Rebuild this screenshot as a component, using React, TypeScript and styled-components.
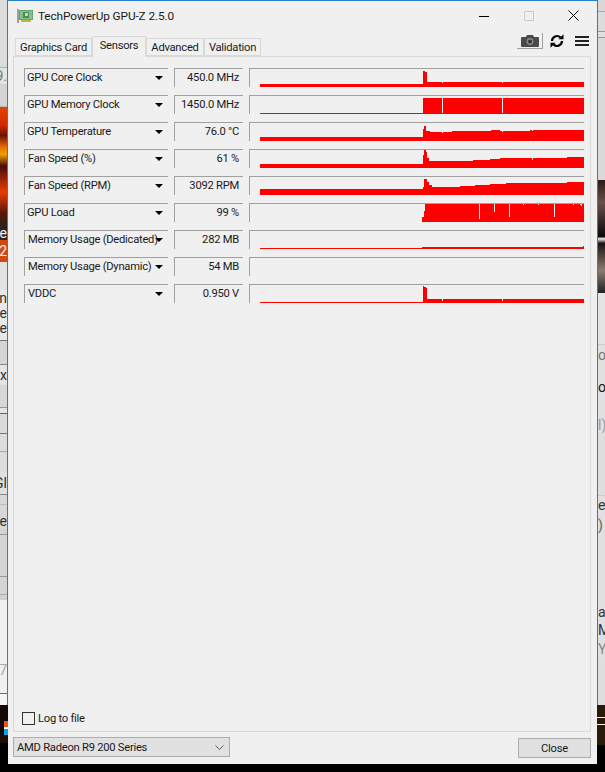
import React from 'react';
import styled, { createGlobalStyle } from 'styled-components';

const GlobalStyle = createGlobalStyle`
  html, body {
    margin: 0;
    padding: 0;
    background: #000;
  }
  * {
    box-sizing: border-box;
  }
`;

const FONT = `Roboto, "Noto Sans", Arial, sans-serif`;

const Stage = styled.div`
  display: flex;
  align-items: flex-start;
  width: 605px;
  height: 772px;
  overflow: hidden;
  background: #000;
  font-family: ${FONT};
`;

const Strip = styled.div`
  display: flex;
  flex-direction: column;
  flex: none;
  width: 8px;
  height: 772px;
  overflow: hidden;
`;

const StripTop = styled.div<{ $side: 'left' | 'right' }>`
  height: 705px;
  flex: none;
  ${p => (p.$side === 'left' ? 'border-right' : 'border-left')}: 1px solid #2a7fc9;
  overflow: hidden;
`;

const Band = styled.div<{ $h: number; $bg: string; $side: 'left' | 'right'; $line?: string; $color?: string }>`
  display: flex;
  align-items: center;
  justify-content: ${p => (p.$side === 'left' ? 'flex-end' : 'flex-start')};
  height: ${p => p.$h}px;
  background: ${p => p.$bg};
  border-bottom: ${p => (p.$line ? `1px solid ${p.$line}` : 'none')};
  overflow: hidden;
  white-space: nowrap;
  font-size: 14px;
  color: ${p => p.$color || '#333'};
`;

const Window = styled.div`
  display: flex;
  flex-direction: column;
  flex: none;
  width: 589px;
  height: 764px;
  padding: 0 6px 0 5px;
  background: #f0f0f0;
  border-top: 1px solid #2a7fc9;
  font-size: 11.2px;
  letter-spacing: -0.25px;
  color: #1a1a1a;
`;

const TitleBar = styled.div`
  display: flex;
  align-items: center;
  height: 29px;
  margin-right: -5px;
  padding: 0 0 0 4px;
  flex: none;
`;

const AppTitle = styled.span`
  margin-left: 5px;
  font-size: 11.8px;
  letter-spacing: -0.1px;
  flex: 1;
`;

const WindowControl = styled.div`
  display: flex;
  justify-content: center;
  width: 45px;
  flex: none;
`;

const TabRow = styled.div`
  display: flex;
  align-items: flex-end;
  height: 26px;
  padding-left: 2px;
  flex: none;
`;

const Tab = styled.div<{ $active?: boolean; $w: number }>`
  display: flex;
  align-items: center;
  justify-content: center;
  width: ${p => p.$w}px;
  height: ${p => (p.$active ? 21 : 18)}px;
  padding-bottom: ${p => (p.$active ? 3 : 0)}px;
  margin-bottom: ${p => (p.$active ? -1 : 0)}px;
  background: #f0f0f0;
  border: 1px solid #d9d9d9;
  border-bottom: ${p => (p.$active ? 'none' : '1px solid #d9d9d9')};
  position: relative;
  z-index: ${p => (p.$active ? 1 : 0)};
`;

const Tools = styled.div`
  display: flex;
  align-items: center;
  margin-left: auto;
  height: 26px;
  padding: 0 2px 4px 0;
`;

const CameraButton = styled.div`
  display: flex;
  align-items: center;
  justify-content: center;
  width: 26px;
  height: 16px;
  margin-right: 7px;
  border-right: 1px solid #a0a0a0;
  border-bottom: 1px solid #a0a0a0;
`;

const ToolIcon = styled.div`
  display: flex;
  margin-right: 11px;
  &:last-child {
    margin-right: 0;
  }
`;

const Panel = styled.div`
  display: flex;
  flex-direction: column;
  height: 676px;
  padding: 11px 6px 6px 10px;
  border: 1px solid #d9d9d9;
  flex: none;
`;

const Rows = styled.div`
  display: flex;
  flex-direction: column;
  gap: 8px;
  flex: 1;
`;

const Row = styled.div`
  display: flex;
  gap: 6px;
  height: 19px;
`;

const Cell = styled.div`
  display: flex;
  align-items: center;
  height: 19px;
  padding-bottom: 2px;
  border-top: 1px solid #a0a0a0;
  border-left: 1px solid #a0a0a0;
  white-space: nowrap;
`;

const SensorName = styled(Cell)<{ $tight?: boolean }>`
  position: relative;
  width: 144px;
  padding-left: ${p => (p.$tight ? 2 : 3)}px;

  &::after {
    content: '';
    position: absolute;
    top: 7px;
    right: 5px;
    border-style: solid;
    border-width: 4px 4px 0 4px;
    border-color: #000 transparent transparent transparent;
  }
`;

const SensorValue = styled(Cell)`
  justify-content: flex-end;
  width: 69px;
  padding-right: 4px;
`;

const Graph = styled(Cell)`
  display: block;
  width: 335px;
  padding-bottom: 0;
`;

const GraphSvg = styled.svg`
  display: block;
`;

const LogRow = styled.label`
  display: flex;
  align-items: center;
  gap: 3px;
  margin-left: -2px;
`;

const LogBox = styled.span`
  width: 13px;
  height: 13px;
  background: #f0f0f0;
  border: 1px solid #333;
`;

const Footer = styled.div`
  display: flex;
  justify-content: space-between;
  align-items: flex-start;
  padding-top: 5px;
  flex: none;
`;

const GpuSelect = styled.div`
  display: flex;
  align-items: center;
  justify-content: space-between;
  width: 217px;
  height: 20px;
  padding: 0 5px 0 3px;
  background: #e1e1e1;
  border: 1px solid #adadad;
`;

const CloseButton = styled.div`
  display: flex;
  align-items: center;
  justify-content: center;
  width: 73px;
  height: 20px;
  margin-top: 1px;
  background: #e1e1e1;
  border: 1px solid #adadad;
`;

type BandSpec = { h: number; bg: string; text?: string; line?: string; color?: string };

const PHOTO_LEFT = 'linear-gradient(180deg, #e8400a 0%, #d42a04 15%, #6a1205 24%, #e86a08 34%, #f0a000 40%, #4a0c05 50%, #e83c04 72%, #5a1608 90%, #30201a 100%)';
const PHOTO_RIGHT = 'linear-gradient(180deg, #2a1c18 0%, #6a5048 20%, #0a0a0a 50%, #eeeeee 52%, #1a1410 56%, #8a7a70 80%, #222 100%)';

const leftBands: BandSpec[] = [
  { h: 68, bg: '#dcdcdc', line: '#b0b0b0' },
  { h: 16, bg: '#e4e4e4', text: '9.', color: '#777' },
  { h: 23, bg: '#d4d4d4', line: '#b8b8b8' },
  { h: 118, bg: PHOTO_LEFT },
  { h: 15, bg: '#30201a', text: 'e', color: '#f4f4f4' },
  { h: 22, bg: '#d2480e', text: '2', color: '#f4f4f4' },
  { h: 28, bg: '#e2e2e2' },
  { h: 15, bg: '#e8e8e8', text: 'n' },
  { h: 15, bg: '#e8e8e8', text: 'e' },
  { h: 15, bg: '#e8e8e8', text: 'e' },
  { h: 6, bg: '#e8e8e8', line: '#777' },
  { h: 24, bg: '#d6d6d6', line: '#888' },
  { h: 20, bg: '#e4e4e4', text: 'x' },
  { h: 23, bg: '#d8d8d8', line: '#999' },
  { h: 6, bg: '#e4e4e4', line: '#666' },
  { h: 20, bg: '#dadada', line: '#777' },
  { h: 18, bg: '#dcdcdc', line: '#aaa' },
  { h: 20, bg: '#dcdcdc' },
  { h: 23, bg: '#e0e0e0', text: 'Gl', line: '#888' },
  { h: 10, bg: '#d8d8d8', line: '#bbb' },
  { h: 8, bg: '#d8d8d8' },
  { h: 16, bg: '#d8d8d8', text: 'e' },
  { h: 6, bg: '#d4d4d4', line: '#999' },
  { h: 42, bg: '#d4d4d4', line: '#999' },
  { h: 18, bg: '#d4d4d4', line: '#aaa' },
  { h: 5, bg: '#d0d0d0' },
  { h: 60, bg: '#f0f0f0' },
  { h: 20, bg: '#f0f0f0', text: '7', color: '#aaa' },
  { h: 14, bg: '#f0f0f0', line: '#2a7fc9' },
  { h: 11, bg: '#f4f4f4' },
];

const leftLower: BandSpec[] = [
  { h: 16, bg: '#140804' },
  { h: 6, bg: 'linear-gradient(90deg, #140804 50%, #f25022 50%)' },
  { h: 2, bg: 'linear-gradient(90deg, #140804 50%, #fff 50%)' },
  { h: 6, bg: 'linear-gradient(90deg, #140804 50%, #05a6f0 50%)' },
  { h: 8, bg: '#1e0c06' },
];

const rightBands: BandSpec[] = [
  { h: 12, bg: '#d8d8d8', line: '#aaa' },
  { h: 20, bg: '#dcdcdc', line: '#999' },
  { h: 6, bg: '#e0e0e0', line: '#999' },
  { h: 142, bg: '#dadada' },
  { h: 113, bg: PHOTO_RIGHT },
  { h: 52, bg: '#e4e4e4', line: '#ccc' },
  { h: 20, bg: '#e0e0e0', text: 'o', color: '#777' },
  { h: 12, bg: '#e0e0e0' },
  { h: 20, bg: '#e0e0e0', text: 'or', color: '#111' },
  { h: 18, bg: '#e0e0e0' },
  { h: 20, bg: '#e0e0e0', text: 'l)', color: '#999' },
  { h: 61, bg: '#dedede', line: '#ccc' },
  { h: 18, bg: '#e0e0e0', text: 'eu' },
  { h: 22, bg: '#e0e0e0', text: ')', color: '#666' },
  { h: 67, bg: '#e0e0e0' },
  { h: 18, bg: '#e0e0e0', text: 'ab' },
  { h: 18, bg: '#e0e0e0', text: 'M' },
  { h: 20, bg: '#e0e0e0', text: 'YE', color: '#888' },
  { h: 46, bg: '#dedede' },
];

const rightLower: BandSpec[] = [
  { h: 12, bg: '#2a1a08' },
  { h: 1, bg: '#f0f0f0' },
  { h: 6, bg: '#2a1a08' },
  { h: 1, bg: '#f0f0f0' },
  { h: 20, bg: '#2a1a08' },
];

type Step = [number, number];

type Sensor = {
  name: string;
  value: string;
  tight?: boolean;
  steps: Step[];
  notches?: Step[];
};

const END = 584;

// steps are [screen x, top of the fill within the 19px row], notches cut the fill from the top
const sensors: Sensor[] = [
  {
    name: 'GPU Core Clock',
    value: '450.0 MHz',
    tight: true,
    steps: [[260, 16], [423, 3], [425, 4], [427, 14]],
    notches: [[442, 15], [502, 15]],
  },
  {
    name: 'GPU Memory Clock',
    value: '1450.0 MHz',
    tight: true,
    steps: [[260, 18], [423, 3]],
    notches: [[442, 18], [502, 18]],
  },
  {
    name: 'GPU Temperature',
    value: '76.0 °C',
    tight: true,
    steps: [[260, 15], [423, 7], [424, 4], [426, 9], [430, 10], [452, 9], [491, 8], [500, 9], [530, 8]],
    notches: [[442, 11], [502, 10], [532, 9]],
  },
  {
    name: 'Fan Speed (%)',
    value: '61 %',
    steps: [[260, 15], [423, 6], [424, 1], [426, 3], [427, 9], [429, 12], [473, 11], [490, 10], [500, 9], [567, 8]],
    notches: [[532, 11]],
  },
  {
    name: 'Fan Speed (RPM)',
    value: '3092 RPM',
    steps: [[260, 13], [423, 11], [424, 3], [427, 6], [429, 9], [432, 11], [460, 10], [475, 9], [490, 8], [506, 7], [567, 6]],
  },
  {
    name: 'GPU Load',
    value: '99 %',
    tight: true,
    steps: [[422, 14], [424, 8], [425, 1]],
    notches: [[479, 16], [494, 9], [509, 14], [523, 2], [538, 2], [554, 14], [573, 2], [580, 2], [581, 3]],
  },
  {
    name: 'Memory Usage (Dedicated)',
    value: '282 MB',
    steps: [[260, 18], [422, 17], [583, 16]],
  },
  {
    name: 'Memory Usage (Dynamic)',
    value: '54 MB',
    steps: [],
  },
  {
    name: 'VDDC',
    value: '0.950 V',
    steps: [[260, 18], [423, 2], [424, 3], [426, 4], [427, 15]],
    notches: [[442, 17], [502, 17]],
  },
];

const SensorGraph = ({ steps, notches = [] }: Pick<Sensor, 'steps' | 'notches'>) => (
  <GraphSvg width={334} height={18} viewBox="250 1 334 18" shapeRendering="crispEdges">
    {steps.map(([x, y], i) => {
      const next = i + 1 < steps.length ? steps[i + 1][0] : END;
      return <rect key={x} x={x} y={y} width={next - x} height={19 - y} fill="#ff0000" />;
    })}
    {notches.map(([x, y]) => (
      <rect key={x} x={x} y={0} width={1} height={y} fill="#f0f0f0" />
    ))}
  </GraphSvg>
);

const StripBands = ({ bands, side }: { bands: BandSpec[]; side: 'left' | 'right' }) => (
  <>
    {bands.map((b, i) => (
      <Band key={i} $h={b.h} $bg={b.bg} $side={side} $line={b.line} $color={b.color}>
        {b.text}
      </Band>
    ))}
  </>
);

const CardIcon = () => (
  <svg width="16" height="14" viewBox="0 0 16 14" shapeRendering="crispEdges">
    <rect x="0" y="0" width="2" height="14" fill="#9aa0a0" />
    <rect x="2" y="1" width="14" height="10" fill="#5fa86a" />
    <rect x="3" y="2" width="12" height="8" fill="#7cc48a" />
    <rect x="6" y="3" width="6" height="6" fill="#4f8a58" />
    <rect x="8" y="4" width="3" height="3" fill="#c7d8c0" />
    <rect x="4" y="11" width="10" height="2" fill="#c9b23c" />
  </svg>
);

const CameraIcon = () => (
  <svg width="18" height="12" viewBox="0 0 18 12">
    <path d="M1 2h4l1-2h6l1 2h4a1 1 0 0 1 1 1v8a1 1 0 0 1-1 1H1a1 1 0 0 1-1-1V3a1 1 0 0 1 1-1z" fill="#4a4a4a" />
    <circle cx="9" cy="6.5" r="3.4" fill="#8a8a8a" />
    <circle cx="9" cy="6.5" r="2" fill="#333" />
  </svg>
);

const RefreshIcon = () => (
  <svg width="14" height="14" viewBox="0 0 14 14" fill="none">
    <path d="M2 7a5 5 0 0 1 8.4-3.6" stroke="#000" strokeWidth="2.2" />
    <path d="M12 7a5 5 0 0 1-8.4 3.6" stroke="#000" strokeWidth="2.2" />
    <path d="M8.5 5.2h5v-5z" fill="#000" />
    <path d="M5.5 8.8h-5v5z" fill="#000" />
  </svg>
);

const MenuIcon = () => (
  <svg width="14" height="10" viewBox="0 0 14 10" shapeRendering="crispEdges">
    <rect y="0" width="14" height="2" fill="#222" />
    <rect y="4" width="14" height="2" fill="#222" />
    <rect y="8" width="14" height="2" fill="#222" />
  </svg>
);

const Chevron = () => (
  <svg width="9" height="5" viewBox="0 0 9 5" fill="none">
    <path d="M0.5 0.5L4.5 4.5L8.5 0.5" stroke="#555" />
  </svg>
);

export default function App() {
  return (
    <Stage>
      <GlobalStyle />
      <Strip>
        <StripTop $side="left">
          <StripBands bands={leftBands} side="left" />
        </StripTop>
        <StripBands bands={leftLower} side="left" />
      </Strip>
      <Window>
        <TitleBar>
          <CardIcon />
          <AppTitle>TechPowerUp GPU-Z 2.5.0</AppTitle>
          <WindowControl>
            <svg width="10" height="10" viewBox="0 0 10 10" shapeRendering="crispEdges">
              <rect y="5" width="10" height="1" fill="#000" />
            </svg>
          </WindowControl>
          <WindowControl>
            <svg width="10" height="10" viewBox="0 0 10 10" shapeRendering="crispEdges">
              <rect x="0.5" y="0.5" width="9" height="9" fill="none" stroke="#ccc" />
            </svg>
          </WindowControl>
          <WindowControl>
            <svg width="11" height="11" viewBox="0 0 11 11">
              <path d="M0.5 0.5L10.5 10.5M10.5 0.5L0.5 10.5" stroke="#000" />
            </svg>
          </WindowControl>
        </TitleBar>
        <TabRow>
          <Tab $w={77}>Graphics Card</Tab>
          <Tab $w={54} $active>Sensors</Tab>
          <Tab $w={58}>Advanced</Tab>
          <Tab $w={57}>Validation</Tab>
          <Tools>
            <CameraButton>
              <CameraIcon />
            </CameraButton>
            <ToolIcon>
              <RefreshIcon />
            </ToolIcon>
            <ToolIcon>
              <MenuIcon />
            </ToolIcon>
          </Tools>
        </TabRow>
        <Panel>
          <Rows>
            {sensors.map(s => (
              <Row key={s.name}>
                <SensorName $tight={s.tight}>{s.name}</SensorName>
                <SensorValue>{s.value}</SensorValue>
                <Graph>
                  <SensorGraph steps={s.steps} notches={s.notches} />
                </Graph>
              </Row>
            ))}
          </Rows>
          <LogRow>
            <LogBox />
            Log to file
          </LogRow>
        </Panel>
        <Footer>
          <GpuSelect>
            AMD Radeon R9 200 Series
            <Chevron />
          </GpuSelect>
          <CloseButton>Close</CloseButton>
        </Footer>
      </Window>
      <Strip>
        <StripTop $side="right">
          <StripBands bands={rightBands} side="right" />
        </StripTop>
        <StripBands bands={rightLower} side="right" />
      </Strip>
    </Stage>
  );
}
